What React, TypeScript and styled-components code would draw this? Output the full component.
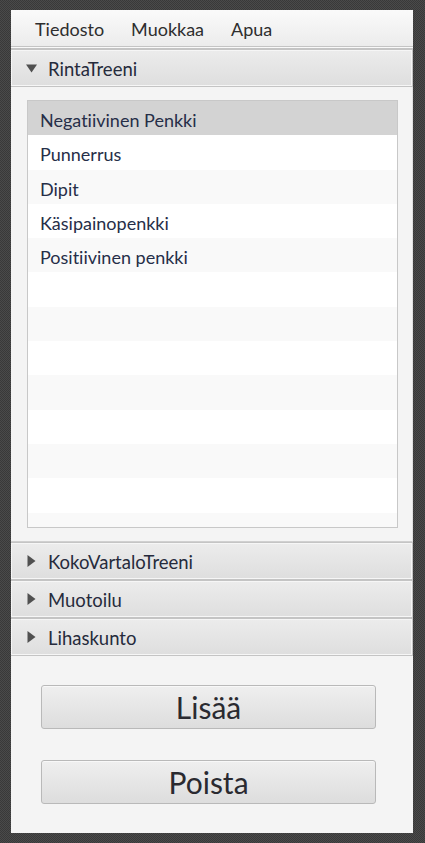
import React from "react";
import styled, { createGlobalStyle } from "styled-components";

const Global = createGlobalStyle`
  html, body { margin: 0; padding: 0; }
  body {
    width: 425px;
    height: 843px;
    overflow: hidden;
    background: repeating-conic-gradient(#4a4a4a 0 25%, #393939 0 50%) 0 0 / 2px 2px;
    font-family: "Lato", "Open Sans", sans-serif;
    font-variant-ligatures: none;
    font-feature-settings: "liga" 0, "clig" 0;
  }
`;

const Frame = styled.div`
  padding: 10px 12px 10px 11px;
`;

const Window = styled.div`
  width: 402px;
  height: 823px;
  background: #f4f4f4;
  display: flex;
  flex-direction: column;
`;

const MenuBar = styled.div`
  display: flex;
  align-items: center;
  gap: 27px;
  padding-left: 24px;
  background: linear-gradient(#fafafa, #ececec);
  border-bottom: 3px double #c4c4c4;
  box-sizing: border-box;
  height: 39px;
`;

const MenuItem = styled.span`
  font-size: 18px;
  color: #2e2e2e;
  padding-top: 2px;
`;

const Header = styled.div`
  height: 38px;
  box-sizing: border-box;
  display: flex;
  align-items: center;
  padding-left: 15px;
  background: linear-gradient(#ececec, #dedede);
  border: 1px solid #c4c4c4;
  box-shadow: inset 0 0 0 1px #f6f6f6;
  border-left: none;
`;

const HeaderLabel = styled.span`
  font-size: 18.5px;
  color: #262b3c;
  padding-top: 1px;
`;

const ArrowBox = styled.span`
  width: 22px;
  display: flex;
  align-items: center;
  flex: none;
`;

const Content = styled.div`
  height: 455px;
  box-sizing: border-box;
  padding: 13px 14px 13px 16px;
  border-bottom: 1px solid #d0d0d0;
  border-right: 1px solid #e0e0e0;
  background: #f4f4f4;
`;

const ListBox = styled.div`
  height: 428px;
  box-sizing: border-box;
  border: 1px solid #c8c8c8;
  background: #fff;
  overflow: hidden;
`;

const Row = styled.div<{ $bg: string }>`
  height: 34.3px;
  box-sizing: border-box;
  display: flex;
  align-items: center;
  padding: 4px 0 0 12px;
  background: ${(p) => p.$bg};
  font-size: 18px;
  color: #262e48;
  white-space: nowrap;
`;

const Bottom = styled.div`
  flex: 1;
  display: flex;
  flex-direction: column;
  gap: 31px;
  padding: 29px 37px 0 30px;
`;

const Button = styled.div`
  height: 44px;
  box-sizing: border-box;
  border: 1px solid #b9b9b9;
  border-radius: 3px;
  background: linear-gradient(#efefef, #dddddd);
  box-shadow: inset 0 1px 0 #f8f8f8;
  display: flex;
  align-items: center;
  justify-content: center;
  font-size: 30px;
  color: #2a2a30;
`;

const Down = () => (
  <ArrowBox>
    <svg width="11" height="9" viewBox="0 0 11 9">
      <polygon points="0,0.5 11,0.5 5.5,8.5" fill="#505050" />
    </svg>
  </ArrowBox>
);

const Right = () => (
  <ArrowBox>
    <svg width="10" height="12" viewBox="0 0 10 12">
      <polygon points="1.5,0 9.5,6 1.5,12" fill="#505050" />
    </svg>
  </ArrowBox>
);

const items = [
  "Negatiivinen Penkki",
  "Punnerrus",
  "Dipit",
  "Käsipainopenkki",
  "Positiivinen penkki",
];

export default function App() {
  const rows = Array.from({ length: 13 }, (_, i) => i);
  return (
    <>
      <Global />
      <Frame>
        <Window>
          <MenuBar>
            <MenuItem>Tiedosto</MenuItem>
            <MenuItem>Muokkaa</MenuItem>
            <MenuItem>Apua</MenuItem>
          </MenuBar>
          <Header>
            <Down />
            <HeaderLabel>RintaTreeni</HeaderLabel>
          </Header>
          <Content>
            <ListBox>
              {rows.map((i) => (
                <Row
                  key={i}
                  $bg={i === 0 ? "#d3d3d3" : i % 2 === 1 ? "#ffffff" : "#f9f9f9"}
                >
                  {items[i] ?? ""}
                </Row>
              ))}
            </ListBox>
          </Content>
          <Header>
            <Right />
            <HeaderLabel>KokoVartaloTreeni</HeaderLabel>
          </Header>
          <Header>
            <Right />
            <HeaderLabel>Muotoilu</HeaderLabel>
          </Header>
          <Header>
            <Right />
            <HeaderLabel>Lihaskunto</HeaderLabel>
          </Header>
          <Bottom>
            <Button>Lisää</Button>
            <Button>Poista</Button>
          </Bottom>
        </Window>
      </Frame>
    </>
  );
}
